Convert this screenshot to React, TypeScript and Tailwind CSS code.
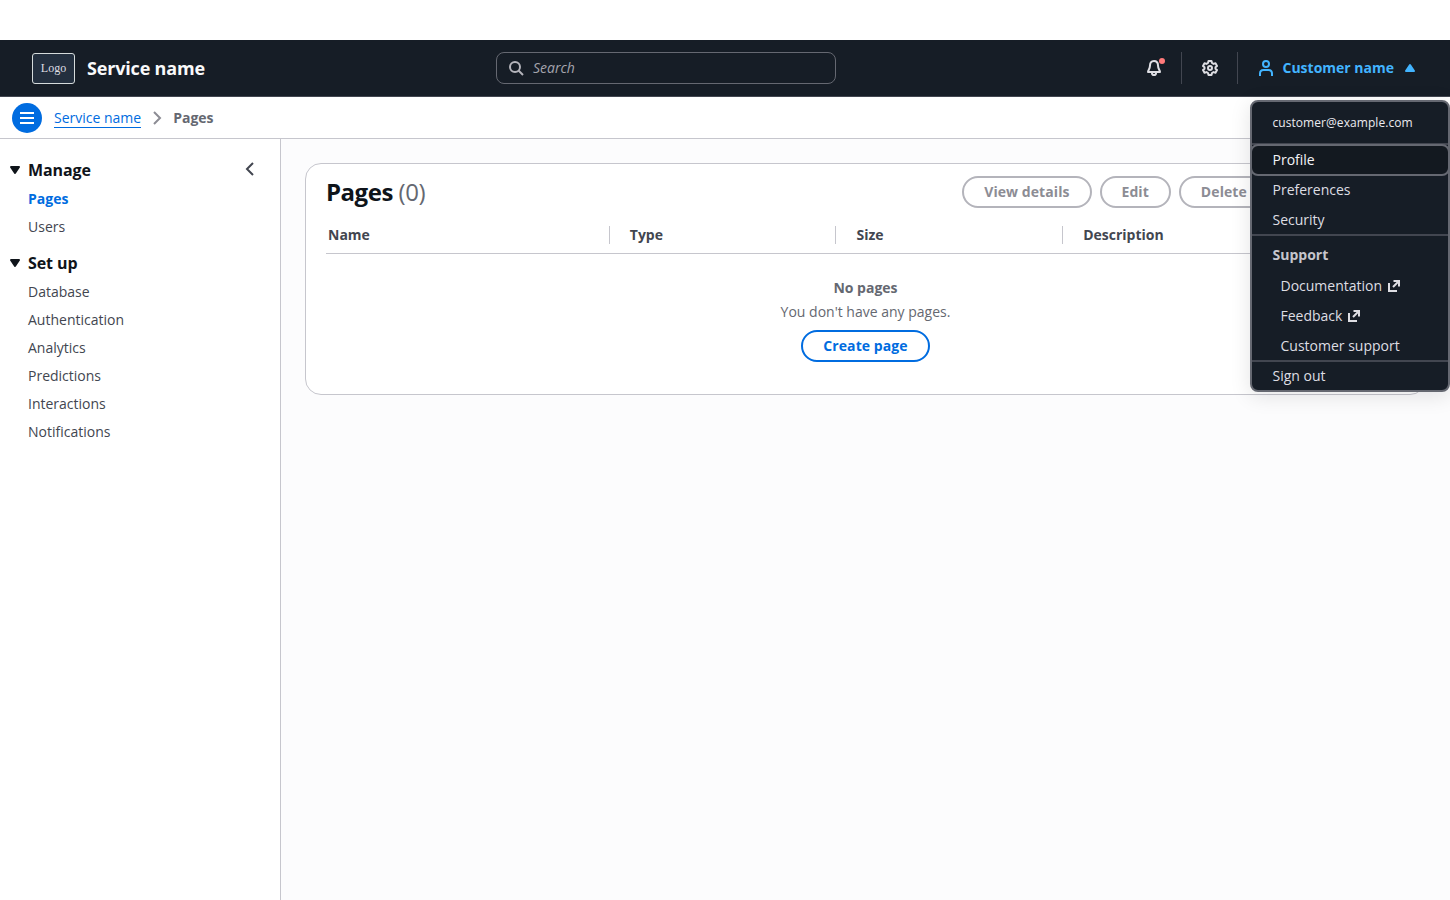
import type { ReactNode } from 'react';

const columns = [
  { name: 'Name', className: 'w-[284px] pl-0.5' },
  { name: 'Type', className: 'w-[226px] pl-[19.8px]' },
  { name: 'Size', className: 'w-[227px] pl-[20.5px]' },
  { name: 'Description', className: 'flex-1 pl-[20.2px]' },
];

const sections = [
  { title: 'Manage', items: ['Pages', 'Users'] },
  {
    title: 'Set up',
    items: ['Database', 'Authentication', 'Analytics', 'Predictions', 'Interactions', 'Notifications'],
  },
];

const Icon = ({ children, className = '' }: { children: ReactNode; className?: string }) => (
  <svg
    viewBox="0 0 16 16"
    fill="none"
    stroke="currentColor"
    strokeWidth="2"
    strokeLinejoin="round"
    className={`h-4 w-4 shrink-0 ${className}`}
  >
    {children}
  </svg>
);

const CaretDown = () => (
  <Icon className="text-[#0f141a]">
    <path d="M4 5h8l-4 6-4-6z" fill="currentColor" />
  </Icon>
);

const ExternalIcon = () => (
  <Icon>
    <path d="M7.500 3H13v5.500M13 3 7 9" strokeLinejoin="miter" />
    <path d="M3 5v8h8" strokeLinejoin="miter" />
  </Icon>
);

const TopNavigation = () => (
  <header className="flex h-[57px] shrink-0 items-center border-b border-[#424650] bg-[#161d26] pl-8 text-[#dedee3]">
    <div className="flex w-[464px] items-center">
      <div className="flex h-[31px] w-[43px] items-center justify-center rounded-[3px] border border-[#d5dbdb] bg-[#232f3e] font-['Liberation_Serif',serif] text-[12px]">
        Logo
      </div>
      <span className="ml-3 text-lg font-bold tracking-[-0.18px] text-[#f9f9fa]">Service name</span>
    </div>
    <div className="flex h-8 w-[340px] items-center rounded-lg border border-[#656871] pl-[11px]">
      <Icon className="text-[#b4b4bb]">
        <circle cx="7" cy="7" r="5" />
        <path d="m15 15-4.5-4.5" />
      </Icon>
      <span className="ml-[9px] italic text-[#a4a4ad]">Search</span>
    </div>
    <div className="flex flex-1 items-center justify-end pr-8">
      <div className="relative mr-[19px]">
        <Icon>
          <path d="M8 1c3 0 4 2.2 4 4.5C12 9 14 10 14 12H2c0-2 2-3 2-6.500C4 3.200 5 1 8 1Z" />
          <path d="M6 12v1.200c0 1 .8 1.800 2 1.800s2-.8 2-1.800V12" />
        </Icon>
        <span className="absolute -right-[3px] -top-0.5 h-1.5 w-1.5 rounded-full bg-[#ff7a7a]" />
      </div>
      <div className="flex h-8 w-[57px] items-center justify-center border-x border-[#424650] pl-px">
        <Icon>
          <path d="M6.500 1h3l.5 2 1.500.9 2-.6 1.500 2.600L13.500 7.200v1.600L15 10.100l-1.500 2.600-2-.6L10 13l-.5 2h-3L6 13l-1.500-.9-2 .6L1 10.100l1.500-1.300V7.200L1 5.900l1.500-2.600 2 .6L6 3l.5-2Z" />
          <circle cx="8" cy="8" r="2" />
        </Icon>
      </div>
      <div className="ml-5 flex items-center font-bold text-[#42b4ff]">
        <Icon>
          <circle cx="8" cy="4" r="3" />
          <path d="M2 16v-2.500C2 11.500 3.500 10 5.500 10h5c2 0 3.500 1.500 3.500 3.500V16" />
        </Icon>
        <span className="ml-2">Customer name</span>
        <Icon className="ml-2">
          <path d="M12 11H4l4-6 4 6z" fill="currentColor" />
        </Icon>
      </div>
    </div>
  </header>
);

const Breadcrumbs = () => (
  <div className="flex h-[42px] shrink-0 items-center border-b border-[#c6c6cd] bg-white pl-3">
    <div className="flex h-[30px] w-[30px] items-center justify-center rounded-full bg-[#006ce0] text-white">
      <Icon>
        <path d="M1 3h14M1 8h14M1 13h14" />
      </Icon>
    </div>
    <span className="ml-3 mt-0.5 border-b border-[#006ce0] leading-[18px] text-[#006ce0]">Service name</span>
    <Icon className="ml-2 text-[#8c8c94]">
      <path d="m5 2 6 6-6 6" strokeLinejoin="miter" />
    </Icon>
    <span className="ml-2 font-bold text-[#656871]">Pages</span>
  </div>
);

const SideNavigation = () => (
  <nav className="relative w-[281px] shrink-0 border-r border-[#c6c6cd] bg-white pt-[18px]">
    <Icon className="absolute left-[242px] top-[22px] text-[#424650]">
      <path d="M11 2 5 8l6 6" strokeLinejoin="miter" />
    </Icon>
    {sections.map(({ title, items }) => (
      <section key={title} className="mb-[9px]">
        <h2 className="mb-0.5 flex h-[26px] items-center pl-[7px] text-base font-bold tracking-[-0.08px] text-[#0f141a]">
          <CaretDown />
          <span className="ml-[5px]">{title}</span>
        </h2>
        <ul>
          {items.map((item) => (
            <li
              key={item}
              className={`flex h-7 items-center pl-7 ${item === 'Pages' ? 'font-bold text-[#006ce0]' : 'text-[#424650]'}`}
            >
              {item}
            </li>
          ))}
        </ul>
      </section>
    ))}
  </nav>
);

const DisabledButton = ({ children }: { children: ReactNode }) => (
  <button className="h-8 rounded-full border-2 border-[#b4b4bb] px-5 font-bold tracking-[0.07px] text-[#8c8c94]">
    {children}
  </button>
);

const PagesTable = () => (
  <div className="h-[232px] rounded-2xl border border-[#c6c6cd] bg-white px-5 pt-3">
    <div className="flex h-8 items-center">
      <h1 className="flex-1 text-2xl font-bold tracking-[-0.48px] text-[#0f141a]">
        Pages <span className="font-normal text-[#656871]">(0)</span>
      </h1>
      <div className="flex gap-2 pr-[136.2px]">
        <DisabledButton>View details</DisabledButton>
        <DisabledButton>Edit</DisabledButton>
        <DisabledButton>Delete</DisabledButton>
      </div>
    </div>
    <div className="mt-2 flex h-[38px] items-center border-b border-[#c6c6cd] font-bold text-[#424650]">
      {columns.map(({ name, className }) => (
        <div key={name} className={`flex items-center ${className}`}>
          <span className="flex-1">{name}</span>
          {name !== 'Description' && <span className="h-[18px] w-px bg-[#c6c6cd]" />}
        </div>
      ))}
    </div>
    <div className="flex flex-col items-center pt-[22px] text-[#656871]">
      <p className="h-6 leading-6 font-bold">No pages</p>
      <p className="h-6 leading-6">You don't have any pages.</p>
      <button className="mt-1.5 h-8 rounded-full border-2 border-[#006ce0] px-5 font-bold tracking-[0.07px] text-[#006ce0]">
        Create page
      </button>
    </div>
  </div>
);

const UserMenu = () => (
  <div className="absolute left-[1250px] top-[100px] flex h-[292px] w-[200px] flex-col rounded-lg border-2 border-[#656871] bg-[#161d26] text-[#dedee3] shadow-[0_4px_20px_1px_rgba(0,7,22,0.1)]">
    <div className="flex h-[43px] items-center border-b-2 border-[#424650] pl-[20.5px] text-xs tracking-[0.06px] text-[#ebebf0]">
      customer@example.com
    </div>
    <div className="-mx-0.5 -mt-px flex h-8 items-center rounded-lg border-2 border-[#656871] bg-[#131920] pl-[20.5px] text-[#f3f3f7]">
      Profile
    </div>
    <div className="-mt-px flex h-[30px] items-center pl-[20.5px]">Preferences</div>
    <div className="flex h-[31px] items-center border-b-2 border-[#424650] pl-[20.5px]">Security</div>
    <div className="flex h-[35px] items-center pl-[20.5px] pt-0.5 font-bold text-[#c6c6cd]">Support</div>
    <div className="flex h-[30px] items-center gap-1 pl-[28.5px]">
      Documentation <ExternalIcon />
    </div>
    <div className="flex h-[30px] items-center gap-1 pl-[28.5px]">
      Feedback <ExternalIcon />
    </div>
    <div className="flex h-[31px] items-center border-b-2 border-[#424650] pl-[28.5px]">Customer support</div>
    <div className="flex h-[28px] items-center pl-[20.5px]">Sign out</div>
  </div>
);

const App = () => {
  return (
    <div className="relative flex h-[900px] w-[1450px] flex-col overflow-hidden bg-white pt-10 font-['Open_Sans',sans-serif] text-sm leading-5 antialiased">
      <TopNavigation />
      <Breadcrumbs />
      <div className="flex flex-1">
        <SideNavigation />
        <main className="flex-1 bg-[#fcfcfd] px-6 pt-6">
          <PagesTable />
        </main>
      </div>
      <UserMenu />
    </div>
  );
};

export default App;
